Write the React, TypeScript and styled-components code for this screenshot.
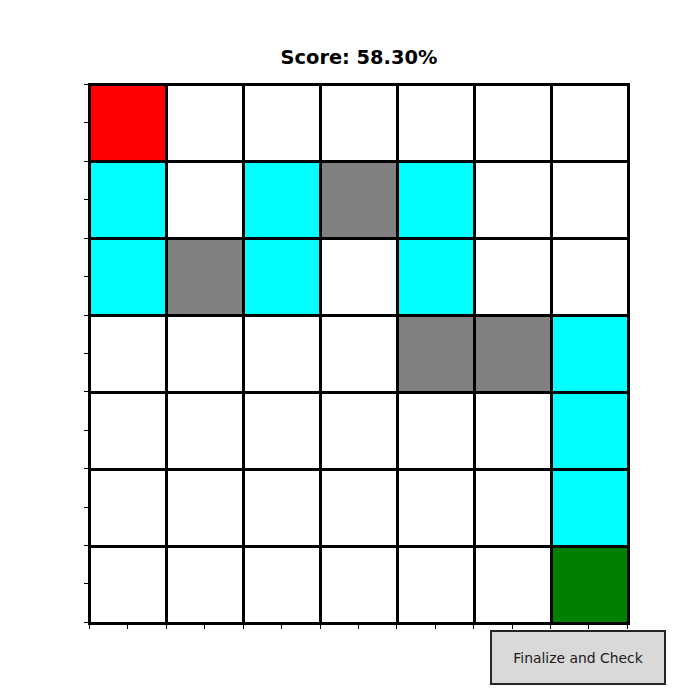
import React from "react";
import styled, { createGlobalStyle } from "styled-components";

const GlobalStyle = createGlobalStyle`
  html, body {
    margin: 0;
    padding: 0;
    background: #ffffff;
  }
  body {
    font-family: "DejaVu Sans", "Liberation Sans", sans-serif;
  }
`;

type CellKind = "w" | "r" | "c" | "g" | "G";

const COLORS: Record<CellKind, string> = {
  w: "#ffffff",
  r: "#ff0000",
  c: "#00ffff",
  g: "#808080",
  G: "#008000",
};

const BOARD: CellKind[][] = [
  ["r", "w", "w", "w", "w", "w", "w"],
  ["c", "w", "c", "g", "c", "w", "w"],
  ["c", "g", "c", "w", "c", "w", "w"],
  ["w", "w", "w", "w", "g", "g", "c"],
  ["w", "w", "w", "w", "w", "w", "c"],
  ["w", "w", "w", "w", "w", "w", "c"],
  ["w", "w", "w", "w", "w", "w", "G"],
];

const Figure = styled.div`
  width: 700px;
  height: 700px;
  background: #ffffff;
  display: flex;
  flex-direction: column;
  padding-top: 48px;
  box-sizing: border-box;
`;

const Title = styled.div`
  width: 542px;
  margin-left: 88px;
  text-align: center;
  font-family: "DejaVu Sans", sans-serif;
  font-weight: bold;
  font-size: 19.4px;
  line-height: 20px;
  color: #000000;
`;

const Axes = styled.div`
  margin-top: 15px;
  margin-left: 84px;
  display: grid;
  grid-template-columns: 4px 542px;
  grid-template-rows: 542px 4px;
`;

const YTicks = styled.div`
  display: flex;
  flex-direction: column;
  justify-content: space-between;
  align-items: flex-end;
  padding: 1px 0 2px 0;
`;

const XTicks = styled.div`
  grid-column: 2;
  display: flex;
  flex-direction: row;
  justify-content: space-between;
  padding: 0 2px 0 1px;
`;

const YTick = styled.div`
  width: 4px;
  height: 1px;
  background: #000000;
`;

const XTick = styled.div`
  width: 1px;
  height: 4px;
  background: #000000;
`;

const Board = styled.div`
  display: grid;
  grid-template-columns: repeat(7, 74px);
  grid-template-rows: repeat(7, 74px);
  gap: 3px;
  padding: 3px;
  background: #000000;
`;

const Cell = styled.div<{ $color: string }>`
  background: ${(p) => p.$color};
`;

const ButtonRow = styled.div`
  display: flex;
  justify-content: flex-end;
  padding-right: 34px;
  margin-top: 1px;
`;

const Button = styled.button`
  width: 176px;
  height: 55px;
  box-sizing: border-box;
  border: 2px solid #262626;
  border-radius: 0;
  background: #d9d9d9;
  color: #1a1a1a;
  font-family: "DejaVu Sans", sans-serif;
  font-size: 13.9px;
  padding: 0;
  cursor: pointer;
`;

const ticks = Array.from({ length: 15 }, (_, i) => i);

export default function App() {
  return (
    <>
      <GlobalStyle />
      <Figure>
        <Title>Score: 58.30%</Title>
        <Axes>
          <YTicks>
            {ticks.map((i) => (
              <YTick key={i} />
            ))}
          </YTicks>
          <Board>
            {BOARD.flatMap((row, r) =>
              row.map((k, c) => <Cell key={`${r}-${c}`} $color={COLORS[k]} />)
            )}
          </Board>
          <XTicks>
            {ticks.map((i) => (
              <XTick key={i} />
            ))}
          </XTicks>
        </Axes>
        <ButtonRow>
          <Button>Finalize and Check</Button>
        </ButtonRow>
      </Figure>
    </>
  );
}
